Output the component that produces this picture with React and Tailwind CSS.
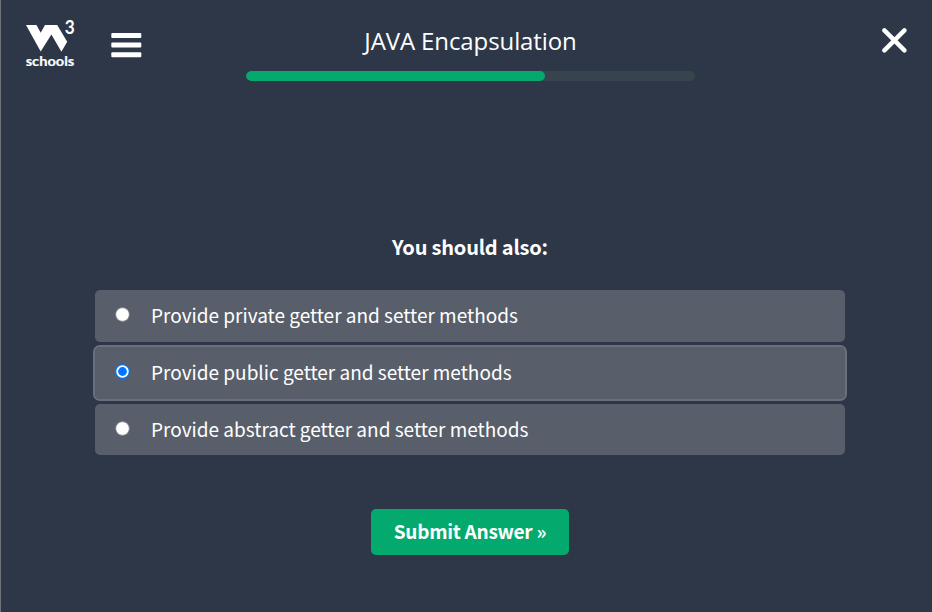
const options = [
  { id: "private", label: "Provide private getter and setter methods" },
  { id: "public", label: "Provide public getter and setter methods" },
  { id: "abstract", label: "Provide abstract getter and setter methods" },
];
const selected = "public";

function Logo() {
  return (
    <svg className="-mt-[8px] h-[60px] w-[54px] shrink-0 overflow-visible" viewBox="0 -8 54 60" fill="#fff" role="img" aria-label="W3Schools">
      <path d="M4 7H14.5L18.7 14.7L23 7H35.2L45.2 23.7L39.4 33.8L29.4 16.6L18.7 33.6Z" />
      <text x="42.8" y="15.8" fontSize="18" fontWeight="700" fontFamily="Lato, sans-serif" textLength="10" lengthAdjust="spacingAndGlyphs">3</text>
      <text x="3.7" y="47.8" fontSize="13.5" fontWeight="700" stroke="#fff" strokeWidth="0.2" fontFamily="Lato, sans-serif" textLength="48.6" lengthAdjust="spacingAndGlyphs">schools</text>
    </svg>
  );
}

function Radio({ checked }) {
  return checked ? (
    <svg className="mb-[3px] size-[15px] shrink-0" viewBox="0 0 15 15">
      <circle cx="7.5" cy="7.5" r="7.5" fill="#0075ff" />
      <circle cx="7.5" cy="7.5" r="6.2" fill="#fff" />
      <circle cx="7.5" cy="7.5" r="4.4" fill="#0075ff" />
    </svg>
  ) : (
    <svg className="mb-[3px] size-[15px] shrink-0" viewBox="0 0 15 15">
      <circle cx="7.5" cy="7.5" r="6.9" fill="#fff" stroke="#767676" strokeWidth="0.9" />
    </svg>
  );
}

export default function App() {
  return (
    <div className="flex h-[612px] w-[932px] flex-col overflow-hidden border-l border-[#70747a] bg-[#2d3748] font-['Noto_Sans_CJK_SC',sans-serif] text-white">
      <header className="flex h-[96px] items-start pl-[21px] pr-[25px]">
        <div className="flex w-[224px] items-start pt-[18px]">
          <Logo />
          <svg className="ml-[35px] mt-[14px] h-[27px] w-[31px]" viewBox="0 0 31 27" fill="#fff">
            <rect x="0.3" y="1" width="30" height="5" rx="1" />
            <rect x="0.3" y="10.4" width="30" height="5" rx="1" />
            <rect x="0.3" y="20.2" width="30" height="5" rx="1" />
          </svg>
        </div>
        <div className="flex w-[449px] flex-col items-center pt-[24px]">
          <h1 className="h-[47px] whitespace-nowrap font-['Open_Sans',sans-serif] text-[24px] leading-[34px] tracking-[-0.1px]">JAVA Encapsulation</h1>
          <div className="h-[10px] w-full overflow-hidden rounded-full bg-[#38444d]">
            <div className="h-full w-[299px] rounded-full bg-[#04aa6d]" />
          </div>
        </div>
        <svg className="ml-auto mt-[27px] size-[26px]" viewBox="0 0 26 26" stroke="#fff" strokeWidth="4.4" strokeLinecap="round">
          <path d="M3.4 3.4L23.4 23.4M23.4 3.4L3.4 23.4" />
        </svg>
      </header>
      <main className="flex flex-col items-center pl-[7px]">
        <h2 className="mt-[135px] h-[59px] whitespace-nowrap text-[20px] font-bold leading-[32px] tracking-[-0.2px]">You should also:</h2>
        <div className="flex w-[750px] flex-col gap-[5px]">
          {options.map((o) => (
            <label
              key={o.id}
              className={`flex h-[52px] items-center rounded-[5px] bg-[#585f6b] pl-[20px] text-[19px] leading-[30px] last:h-[51px] ${
                o.id === selected ? "outline-2 outline-[#69717c]" : ""
              }`}
            >
              <Radio checked={o.id === selected} />
              <span className="mb-[2px] ml-[21px] whitespace-nowrap">{o.label}</span>
            </label>
          ))}
        </div>
        <button className="mt-[54px] h-[46px] w-[198px] whitespace-nowrap rounded-[5px] bg-[#04aa6d] pb-[2px] text-[19px] font-bold leading-[30px] tracking-[-0.25px]">
          Submit Answer »
        </button>
      </main>
    </div>
  );
}
